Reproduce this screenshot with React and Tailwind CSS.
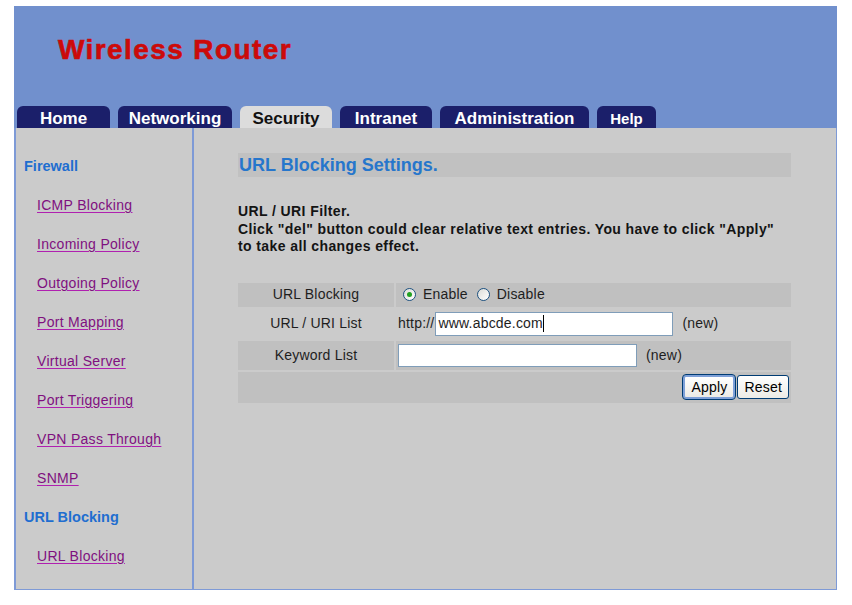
import React from 'react';

const tabs = [
  { label: 'Home', w: 'w-[93px]' },
  { label: 'Networking', w: 'w-[114px]' },
  { label: 'Security', w: 'w-[92px]', active: true },
  { label: 'Intranet', w: 'w-[92px]' },
  { label: 'Administration', w: 'w-[149px]' },
  { label: 'Help', w: 'w-[59px]', small: true },
];

const menu = [
  { label: 'Firewall', head: true },
  { label: 'ICMP Blocking' },
  { label: 'Incoming Policy' },
  { label: 'Outgoing Policy' },
  { label: 'Port Mapping' },
  { label: 'Virtual Server' },
  { label: 'Port Triggering' },
  { label: 'VPN Pass Through' },
  { label: 'SNMP' },
  { label: 'URL Blocking', head: true },
  { label: 'URL Blocking' },
];

const Radio = ({ checked }) => (
  <span className="w-[13px] h-[13px] rounded-full border border-[#1c5180] bg-gradient-to-br from-[#dcdcd7] to-white flex items-center justify-center shrink-0">
    {checked && <span className="w-[5px] h-[5px] rounded-full bg-[#21a121]" />}
  </span>
);

const XpButton = ({ children, primary }) => (
  <button
    className={`h-[24px] px-[6px] rounded-[3px] text-[14px] text-black bg-gradient-to-b from-white to-[#ecebe6] ${
      primary ? 'border-2 border-[#7ea0d8] outline outline-1 outline-[#003c74]' : 'border border-[#003c74]'
    }`}
  >
    {children}
  </button>
);

export default function App() {
  return (
    <div className="min-h-screen bg-white pt-[6px] pl-[14px]" style={{ fontFamily: '"Liberation Sans", Arial, sans-serif' }}>
      <div className="w-[823px] h-[584px] flex flex-col">
        {/* header */}
        <div className="h-[122px] bg-[#7190cd] flex flex-col">
          <div className="pl-[44px] pt-[28px] text-[28px] leading-[32px] font-bold text-[#cc0a0a] tracking-[1.4px] [-webkit-text-stroke:0.6px_#cc0a0a]">
            Wireless Router
          </div>
          <div className="mt-auto flex items-end gap-2 pl-[3px]">
            {tabs.map((t) => (
              <div
                key={t.label}
                className={`${t.w} h-[22px] rounded-t-[6px] flex items-end justify-center font-bold leading-[19px] ${
                  t.small ? 'text-[15px]' : 'text-[17px]'
                } ${t.active ? 'bg-[#dcdcdc] text-[#111]' : 'bg-[#1b1f6a] text-white'}`}
              >
                {t.label}
              </div>
            ))}
          </div>
        </div>

        {/* body */}
        <div className="flex-1 flex bg-[#cbcbcb] border-l-2 border-r border-b border-[#7e9ad6]">
          <div className="w-[178px] border-r-2 border-[#7e9ad6] pt-[19px]">
            {menu.map((m, i) => (
              <div key={i} className="h-[39px] flex items-center">
                {m.head ? (
                  <span className="pl-[8px] text-[14.5px] font-bold text-[#1f6ed0]">{m.label}</span>
                ) : (
                  <span className="pl-[21px] text-[14px] tracking-[0.3px] text-[#7f107f] underline underline-offset-2 decoration-[#b020b0]">
                    {m.label}
                  </span>
                )}
              </div>
            ))}
          </div>

          <div className="flex-1 pl-[44px] pt-[25px]">
            <div className="w-[553px] h-[24px] bg-[#c1c1c1] flex items-center pl-[1px] text-[18px] font-bold text-[#2676cc]">
              URL Blocking Settings.
            </div>

            <div className="mt-[26px] text-[14px] leading-[17.5px] font-bold tracking-[0.4px] text-[#141414]">
              URL / URI Filter.
              <br />
              Click "del" button could clear relative text entries. You have to click "Apply"
              <br />
              to take all changes effect.
            </div>

            <div className="mt-[27px] w-[553px] flex flex-col gap-[2px] text-[14px] tracking-[0.2px] text-[#1e1e1e]">
              <div className="h-[24px] flex gap-[2px]">
                <div className="w-[156px] bg-[#c0c0c0] flex items-center justify-center">URL Blocking</div>
                <div className="flex-1 bg-[#c0c0c0] flex items-center pl-[7px]">
                  <Radio checked />
                  <span className="ml-[7px]">Enable</span>
                  <span className="ml-[9px]"><Radio /></span>
                  <span className="ml-[7px]">Disable</span>
                </div>
              </div>

              <div className="h-[30px] flex gap-[2px]">
                <div className="w-[156px] flex items-center justify-center">URL / URI List</div>
                <div className="flex-1 flex items-center pl-[2px]">
                  <span>http://</span>
                  <div className="ml-[1px] w-[238px] h-[24px] bg-white border border-[#7f9db9] flex items-center pl-[2px]">
                    www.abcde.com
                    <span className="w-[1px] h-[17px] bg-black" />
                  </div>
                  <span className="ml-[9px]">(new)</span>
                </div>
              </div>

              <div className="h-[29px] flex gap-[2px]">
                <div className="w-[156px] bg-[#c0c0c0] flex items-center justify-center">Keyword List</div>
                <div className="flex-1 bg-[#c0c0c0] flex items-center pl-[2px]">
                  <div className="w-[239px] h-[23px] bg-white border border-[#7f9db9]" />
                  <span className="ml-[9px]">(new)</span>
                </div>
              </div>

              <div className="h-[31px] bg-[#c0c0c0] flex items-center justify-end gap-[2px] pr-[2px]">
                <XpButton primary>Apply</XpButton>
                <XpButton>Reset</XpButton>
              </div>
            </div>
          </div>
        </div>
      </div>
    </div>
  );
}
